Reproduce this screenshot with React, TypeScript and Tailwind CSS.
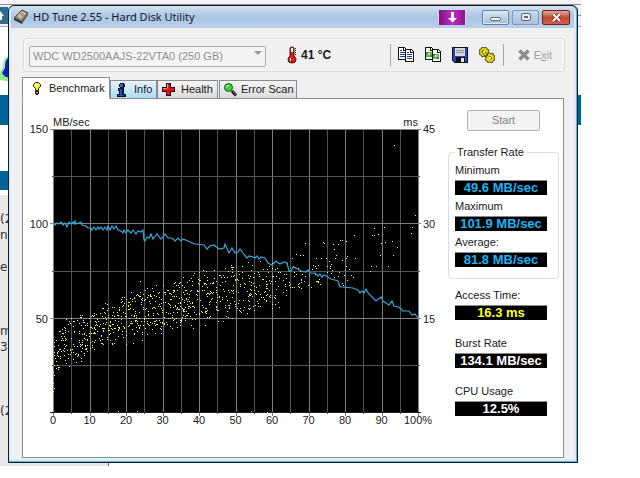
import { useState } from 'react';
import type { ReactNode } from 'react';

const drives = ['WDC WD2500AAJS-22VTA0 (250 GB)'];

// Transfer rate curve, in chart units
const transferLine =
    '53,224 55,225 57,223 59,224 61,222 63,225 65,223 67,227 69,222 71,224 73,222 74,224 75,221 76,224 79,223 81,222 82,225 86,226 88,228 91,228 92,230 94,227 96,230 98,227 99,229 101,227 103,230 105,227 107,230 108,226 110,230 112,226 114,229 116,226 118,230 121,231 123,233 124,230 126,233 128,230 131,233 133,230 136,234 138,231 141,232 143,230 144,240 145,241 147,237 149,238 151,234 153,239 157,234 161,239 165,234 168,238 172,238 175,241 178,238 181,241 183,239 188,241 195,244 204,245 207,249 210,246 214,245 219,249 224,248 225,244 229,253 232,248 235,253 238,252 240,249 243,253 247,258 249,256 253,257 255,258 257,256 259,259 261,257 265,258 268,263 272,265 276,261 280,264 284,262 287,263 289,271 291,271 293,267 298,269 301,271 306,272 308,270 310,273 315,273 318,276 320,274 322,277 324,275 326,276 331,279 335,280 338,281 340,287 343,287 353,288 358,290 360,293 362,291 364,293 366,289 368,293 376,301 381,297 383,301 389,305 392,301 394,306 399,307 403,311 409,311 412,315 415,314 418,318';

// x, fastest and slowest access at that position
const envelope = [
    [54, 330, 378], [62, 322, 374], [70, 312, 366], [90, 307, 361], [106, 296, 354], [126, 288, 349],
    [140, 279, 341], [160, 283, 338], [180, 277, 330], [203, 268, 328], [217, 262, 326],
    [242, 260, 318], [275, 260, 312], [290, 253, 304], [305, 245, 298], [325, 249, 294], [350, 252, 287],
];

const outliers = [
    [394, 145], [415, 215], [412, 227], [411, 233], [374, 228], [384, 227], [372, 235], [374, 235], [378, 234],
    [354, 235], [340, 240], [342, 240], [346, 241], [338, 244], [333, 244], [323, 242], [324, 243], [305, 243],
    [381, 243], [385, 242], [392, 241], [397, 247], [380, 255], [393, 255], [371, 266], [370, 271], [376, 266],
    [388, 266], [355, 258], [342, 260], [346, 258], [336, 255], [334, 249], [345, 270], [349, 269], [351, 275],
    [353, 277], [53, 383], [54, 388], [53, 391], [54, 375], [53, 372], [118, 411], [137, 411], [251, 411], [267, 412],
];

function buildScatter() {
    const dots = [...outliers];
    let seed = 2550;
    const rand = () => {
        seed = (seed * 16807) % 2147483647;
        return seed / 2147483647;
    };
    for (let i = 0; i < envelope.length - 1; i++) {
        const [x0, top0, low0] = envelope[i];
        const [x1, top1, low1] = envelope[i + 1];
        const density = x0 < 217 ? 4 : x0 < 275 ? 3 : x0 < 305 ? 1.8 : 0.8;
        const count = Math.round((x1 - x0) * density);
        for (let n = 0; n < count; n++) {
            const t = rand();
            const top = top0 + (top1 - top0) * t;
            const low = low0 + (low1 - low0) * t;
            const spread = (rand() * 3 + rand()) / 4;
            dots.push([Math.round(x0 + (x1 - x0) * t), Math.round(top + (low - top) * spread)]);
        }
    }
    return dots;
}

const scatter = buildScatter();
const columns = Array.from({ length: 21 }, (_, i) => Math.round(53 + i * 18.25));
const rows = [129, 176, 223, 271, 318, 365, 412];

function Chart() {
    return (
        <svg viewBox="23 99 425 358" className="block w-full" role="img" aria-label="Benchmark" fontFamily="'Liberation Sans', Arial, sans-serif" fontSize="11" fill="#222">
            <rect x="53" y="129" width="366" height="284" fill="#000" />
            <g shapeRendering="crispEdges">
                {columns.map((x, i) => (
                    <rect key={x} x={x} y="129" width="1" height={i % 2 ? 285 : 287} fill={i % 2 ? '#545454' : '#808080'} />
                ))}
                {rows.map((y, i) => (
                    <rect key={y} x={i % 2 ? 52 : 50} y={y} width={i % 2 ? 368 : 371} height="1" fill={y === 412 ? '#222' : i % 2 ? '#545454' : '#808080'} />
                ))}
                {scatter.map(([x, y], i) => (
                    <rect key={i} x={x} y={y} width="1" height="1" fill="#f0fa50" />
                ))}
            </g>
            <polyline points={transferLine} fill="none" stroke="#35a7dc" strokeWidth="1.2" />

            <text x="53" y="126">MB/sec</text>
            <text x="418" y="126" textAnchor="end">ms</text>
            {[150, 100, 50].map((n, i) => (
                <text key={n} x="48" y={133 + i * 95} textAnchor="end">{n}</text>
            ))}
            {[45, 30, 15].map((n, i) => (
                <text key={n} x="423" y={133 + i * 95}>{n}</text>
            ))}
            {[0, 10, 20, 30, 40, 50, 60, 70, 80, 90].map((n) => (
                <text key={n} x={53 + n * 3.65} y="424" textAnchor="middle">{n}</text>
            ))}
            <text x="418" y="424" textAnchor="middle">100%</text>
        </svg>
    );
}

function DiskIcon() {
    return (
        <svg viewBox="0 0 16 16" className="size-4 shrink-0">
            <path d="M1 9 9 1l6 3-6 9z" fill="#8a8178" stroke="#49433e" />
            <path d="m4 7 5-5 4 2-5 6z" fill="#d8c5a8" />
            <circle cx="9" cy="5.500" r="2" fill="#ab9a85" />
            <path d="m1 9 8 4v2L1 11z" fill="#39342f" />
            <path d="m9 13 6-9v2l-6 9z" fill="#6a625b" />
        </svg>
    );
}

function ThermometerIcon() {
    return (
        <svg viewBox="0 0 10 18" className="h-[18px] w-[10px] shrink-0">
            <path d="M3 2.500Q3 1 5 1t2 1.500V10q2 1.500 2 3.500a4 3.500 0 0 1-8 0Q1 11.500 3 10z" fill="#e01818" stroke="#4a0a0a" />
            <path d="M4 2h2v4H4z" fill="#fff" />
            <path d="M3 12h1v3H3z" fill="#fff" />
            <path d="M8 2h1v1H8zm0 2h1v1H8zm0 2h1v1H8zm0 2h1v1H8z" fill="#222" />
        </svg>
    );
}

function CopyIcon({ picture }: { picture?: boolean }) {
    return (
        <svg viewBox="0 0 16 16" className="size-4" shapeRendering="crispEdges">
            {['translate(0 0)', 'translate(7 2)'].map((pos) => (
                <g key={pos} transform={pos}>
                    <path d="M0 0h6l3 3v10H0z" fill="#111" />
                    <path d="M1 1h4v3h3v8H1z" fill="#fff" />
                    <path d="M6 1v2h2z" fill="#fff" />
                    {picture ? (
                        <>
                            <path d="M1 5h6v5H1z" fill="#58b838" />
                            <path d="M1 5h2v2H1zm4 3h2v2H5z" fill="#2f79c0" />
                            <path d="M3 6h2v2H3z" fill="#f0e838" />
                        </>
                    ) : (
                        <path d="M2 3h2v1H2zm0 2h5v1H2zm0 2h5v1H2zm0 2h5v1H2z" fill="#2038a0" />
                    )}
                </g>
            ))}
        </svg>
    );
}

function SaveIcon() {
    return (
        <svg viewBox="0 0 16 16" className="size-4" shapeRendering="crispEdges">
            <path d="M0 0h16v16H2l-2-2z" fill="#101020" />
            <path d="M1 1h14v14H2l-1-1z" fill="#2444b8" />
            <path d="M3 1h10v8H3z" fill="#d4d8d8" />
            <path d="M4 3h8v1H4zm0 2h8v1H4z" fill="#8c9494" />
            <path d="M4 10h9v5H4z" fill="#111" />
            <path d="M9 11h3v4H9z" fill="#e8e8e8" />
        </svg>
    );
}

function OptionsIcon() {
    return (
        <svg viewBox="0 0 16 16" className="size-4">
            <path d="m4 0 1 1 2-1 1 2 2 1-1 2 1 2-2 1-1 2-2-1-2 1-1-2-2-1 1-2-1-2 2-1 1-2z" fill="#e8d800" stroke="#222" strokeWidth=".8" />
            <path d="m11 6 1 1 2-1v2l2 1-1 2 1 2-2 1-1 2-2-1-2 1-1-2-2-1 1-2-1-2 2-1 1-2z" fill="#e8d800" stroke="#222" strokeWidth=".8" />
            <path d="m4 3 5 5-2 2-4-5zM10 9l3 2-2 2" fill="none" stroke="#5a5200" />
            <circle cx="5" cy="5" r="1" fill="#fff" />
            <circle cx="11" cy="11" r="1" fill="#fff" />
        </svg>
    );
}

function BulbIcon() {
    return (
        <svg viewBox="0 0 8 13" className="h-[13px] w-2 shrink-0">
            <path d="M2.500.5h3l2 2v2l-2 2v2h-3v-2l-2-2v-2z" fill="#ffee20" stroke="#222" />
            <path d="M2 2h2v2H2z" fill="#fff" />
            <path d="M2 9h4v3H5v1H3v-1H2z" fill="#222" />
            <path d="M3 10h2v1H3z" fill="#ddd020" />
        </svg>
    );
}

function InfoIcon() {
    return (
        <svg viewBox="0 0 9 14" className="h-[14px] w-[9px] shrink-0" shapeRendering="crispEdges">
            <path d="M3 0h4v1h1v3H7v1H3V4H2V1h1z" fill="#111" />
            <path d="M3 1h3v3H3z" fill="#2c68e0" />
            <path d="M1 5h6v6h2v3H0v-3h2V8H1z" fill="#111" />
            <path d="M2 6h3v6h2v1H1v-1h2V7H2z" fill="#2450d8" />
        </svg>
    );
}

function HealthIcon() {
    return (
        <svg viewBox="0 0 13 13" className="size-[13px] shrink-0" shapeRendering="crispEdges">
            <path d="M4 0h5v4h4v5H9v4H4V9H0V4h4z" fill="#111" />
            <path d="M5 1h3v4h4v3H8v4H5V8H1V5h4z" fill="#e81414" />
            <path d="M5 1h1v4H5zM1 5h4v1H1z" fill="#ff8a8a" />
        </svg>
    );
}

function ScanIcon() {
    return (
        <svg viewBox="0 0 13 14" className="h-[14px] w-[13px] shrink-0">
            <path d="m8 8 4 4.500" stroke="#111" strokeWidth="3" />
            <path d="m8 7 4 5" stroke="#5a80c0" />
            <circle cx="4.500" cy="4.500" r="4" fill="#34d834" stroke="#164a16" />
            <path d="M2.500 4.500q0-2 2-2" fill="none" stroke="#d8ffd8" />
        </svg>
    );
}

const tabs: { name: string; icon: ReactNode; width: string }[] = [
    { name: 'Benchmark', icon: <BulbIcon />, width: 'w-[88px] gap-2 pl-2.5' },
    { name: 'Info', icon: <InfoIcon />, width: 'w-[47px] gap-2 pl-1.5' },
    { name: 'Health', icon: <HealthIcon />, width: 'w-[61px] gap-1.5 pl-1' },
    { name: 'Error Scan', icon: <ScanIcon />, width: 'w-[78px] gap-1 pl-1' },
];

function Reading({ label, value, color }: { label: string; value: string; color: string }) {
    return (
        <div className="w-[92px]">
            <dt className="text-[11px] leading-5 whitespace-nowrap">{label}</dt>
            <dd className={`h-[15px] border-t border-[#888] bg-black text-center text-[13px] leading-[14px] font-bold whitespace-nowrap ${color}`}>{value}</dd>
        </div>
    );
}

function TitleBar() {
    return (
        <header className="flex h-[22px] items-center bg-gradient-to-b from-[#d3e2f2] via-[#a9c5e2] to-[#b9d0ea] pr-1 pl-0.5">
            <DiskIcon />
            <h1 className="ml-1 flex-1 font-['Noto_Sans','Open_Sans',sans-serif] text-[11px] text-[#161630]">HD Tune 2.55 - Hard Disk Utility</h1>
            <button aria-label="Minimize to tray" className="mr-4 flex h-[15px] w-7 items-center justify-center border-x border-[#e8d8f0] bg-gradient-to-r from-[#7a1184] via-[#c42cc4] to-[#86188c]">
                <svg viewBox="0 0 13 11" className="h-[11px] w-[13px]">
                    <path d="M5 0h3v6h3L6.500 10.500 2 6h3z" fill="#fff" />
                </svg>
            </button>
            <div className="flex gap-[3px]">
                <button aria-label="Minimize" className="flex h-[15px] w-[27px] items-center justify-center rounded-xs border border-[#67809c] bg-gradient-to-b from-[#dce8f4] to-[#a4bcd6] shadow-[inset_0_0_0_1px_#dbe8f5]">
                    <span className="mt-1 h-1 w-[11px] rounded-xs border border-[#5d6b7c] bg-white" />
                </button>
                <button aria-label="Maximize" className="flex h-[15px] w-[27px] items-center justify-center rounded-xs border border-[#8799b0] bg-gradient-to-b from-[#c9daec] to-[#a9c2de]">
                    <span className="flex h-2 w-2.5 items-center justify-center rounded-xs border border-[#5d6b7c] bg-[#e6edf5]">
                        <span className="h-0.5 w-1 bg-[#5d6b7c]" />
                    </span>
                </button>
                <button aria-label="Close" className="flex h-[15px] w-7 items-center justify-center rounded-xs border border-[#6a2020] bg-gradient-to-b from-[#e0a898] via-[#c44a34] to-[#d0604a]">
                    <svg viewBox="0 0 11 9" className="h-[9px] w-[11px]">
                        <path d="m2 1 7 7M9 1 2 8" stroke="#6b3030" strokeWidth="3.500" />
                        <path d="m2 1 7 7M9 1 2 8" stroke="#fff" strokeWidth="2" />
                    </svg>
                </button>
            </div>
        </header>
    );
}

function Toolbar() {
    return (
        <div className="mt-[10px] mr-[9px] ml-3 flex h-[34px] items-center rounded-sm border border-[#dcdcdc] pr-3 pl-[5px] shadow-[inset_0_0_0_1px_#fafafa]">
            <div className="relative w-[237px]">
                <select disabled aria-label="Drive" className="h-[21px] w-full appearance-none rounded-xs border border-[#adadad] bg-[#f4f4f4] pl-[3px] text-[11px] text-[#909090]">
                    {drives.map((d) => (
                        <option key={d}>{d}</option>
                    ))}
                </select>
                <span className="pointer-events-none absolute top-2 right-1 border-x-4 border-t-4 border-x-transparent border-t-[#999]" />
            </div>
            <div className="ml-[21px] flex items-center gap-1">
                <ThermometerIcon />
                <span className="text-[12px] font-bold text-[#1a1a1a]">41 °C</span>
            </div>
            <div className="flex-1" />
            <div className="flex h-[22px] items-center gap-[11px] border-x border-[#a8a8a8] pr-2 pl-[7px]">
                <button aria-label="Copy text"><CopyIcon /></button>
                <button aria-label="Copy screenshot"><CopyIcon picture /></button>
                <button aria-label="Save screenshot"><SaveIcon /></button>
                <button aria-label="Options"><OptionsIcon /></button>
            </div>
            <button disabled className="ml-[14px] flex items-center gap-1 text-[11px] text-[#a0a0a0]">
                <svg viewBox="0 0 12 12" className="size-3">
                    <path d="m1.500 1.500 9 9m0-9-9 9" stroke="#8e8e8e" strokeWidth="3.500" />
                </svg>
                <span>E<u>x</u>it</span>
            </button>
        </div>
    );
}

// Web page that shows behind the window
function Backdrop() {
    return (
        <div className="absolute top-0 left-0 -z-10 w-[581px]" aria-hidden="true">
            <div className="h-[5px] border-b border-[#909090] bg-[#f4f4f4]" />
            <div className="flex h-[22px] items-center justify-between border-b border-[#b8a8a0] bg-[#f0f0f0]">
                <div className="h-[17px] w-2 bg-[#2c6c98]">
                    <svg viewBox="0 0 8 17" className="h-[17px] w-2">
                        <path d="m0 4 4 5H2v4H0z" fill="#fff" />
                    </svg>
                </div>
                <div className="h-px w-1 bg-[#62a882]" />
            </div>
            <div className="h-[68px] pt-[28px]">
                <svg viewBox="0 0 8 28" className="h-7 w-2">
                    <path d="M8 1Q3 3 3 12L0 17v8q4 1 8 1z" fill="#8df08d" />
                    <path d="M8 3Q5 5 5 13l-3 5q3 5 6 4z" fill="#1020c0" />
                </svg>
            </div>
            <div className="h-[30px] bg-[#04629a]" />
            <div className="h-[46px]" />
            <div className="h-[19px] w-[109px] bg-[#04629a]" />
            <div className="mt-[5px] h-[271px] w-[109px] border-r border-[#607080] bg-[#e8e8e8] pt-[16px]">
                <pre className="font-['DejaVu_Sans',sans-serif] text-[12px] leading-4 text-[#303038]">
                    {'(2\nn\n\ne\n\n\n\nm\n33\n\n\n\n(2'}
                </pre>
            </div>
        </div>
    );
}

export default function App() {
    const [active, setActive] = useState('Benchmark');

    return (
        <div className="relative isolate min-h-screen bg-white pt-[5px] pr-[62px] pl-2 font-['Liberation_Sans',Arial,sans-serif] text-[#202020]">
            <Backdrop />
            <main className="rounded-t-md border border-[#0b1a24] bg-[#55b8dc] pr-px pb-px">
                <div className="overflow-hidden rounded-t-md border-x-2 border-b-2 border-[#dcebf8] bg-[#f0f0f0]">
                    <TitleBar />
                    <Toolbar />

                    <div role="tablist" className="relative mt-[5px] -mb-px ml-[11px] flex items-end">
                        {tabs.map((tab) => (
                            <button
                                key={tab.name}
                                role="tab"
                                aria-selected={active === tab.name}
                                onClick={() => setActive(tab.name)}
                                className={`flex items-center border border-[#898c95] text-[11px] whitespace-nowrap ${tab.width} ${active === tab.name
                                    ? 'h-[22px] border-b-white bg-white'
                                    : tab.name === 'Info'
                                        ? 'h-[19px] bg-gradient-to-b from-[#e8f5fc] to-[#a8dbf4]'
                                        : 'mr-px h-[19px] bg-gradient-to-b from-[#f4f4f4] to-[#dcdcdc]'
                                    }`}
                            >
                                {tab.icon}
                                {tab.name}
                            </button>
                        ))}
                    </div>

                    <section className="mr-[10px] ml-[11px] flex items-start border border-[#898c95] bg-white">
                        <div className="min-w-0 flex-1">
                            <Chart />
                        </div>
                        <div className="mr-1 w-[111px] shrink-0 pt-[11px]">
                            <button disabled className="mx-auto block h-[21px] w-[73px] rounded-xs border border-[#adb2b5] bg-[#f4f4f4] text-[11px] text-[#838383]">
                                Start
                            </button>
                            <fieldset className="mt-[14px] rounded-sm border border-[#d5dfe5] pb-[11px] pl-1.5">
                                <legend className="px-0.5 text-[11px] leading-[15px]">Transfer Rate</legend>
                                <dl className="flex flex-col gap-px">
                                    <Reading label="Minimum" value="49.6 MB/sec" color="text-[#1cb4f4]" />
                                    <Reading label="Maximum" value="101.9 MB/sec" color="text-[#1cb4f4]" />
                                    <Reading label="Average:" value="81.8 MB/sec" color="text-[#1cb4f4]" />
                                </dl>
                            </fieldset>
                            <dl className="mt-1.5 flex flex-col gap-[13px] pl-[7px]">
                                <Reading label="Access Time:" value="16.3 ms" color="text-[#ffff20]" />
                                <Reading label="Burst Rate" value="134.1 MB/sec" color="text-white" />
                                <Reading label="CPU Usage" value="12.5%" color="text-white" />
                            </dl>
                        </div>
                    </section>
                    <div className="h-px" />
                </div>
            </main>
        </div>
    );
}
